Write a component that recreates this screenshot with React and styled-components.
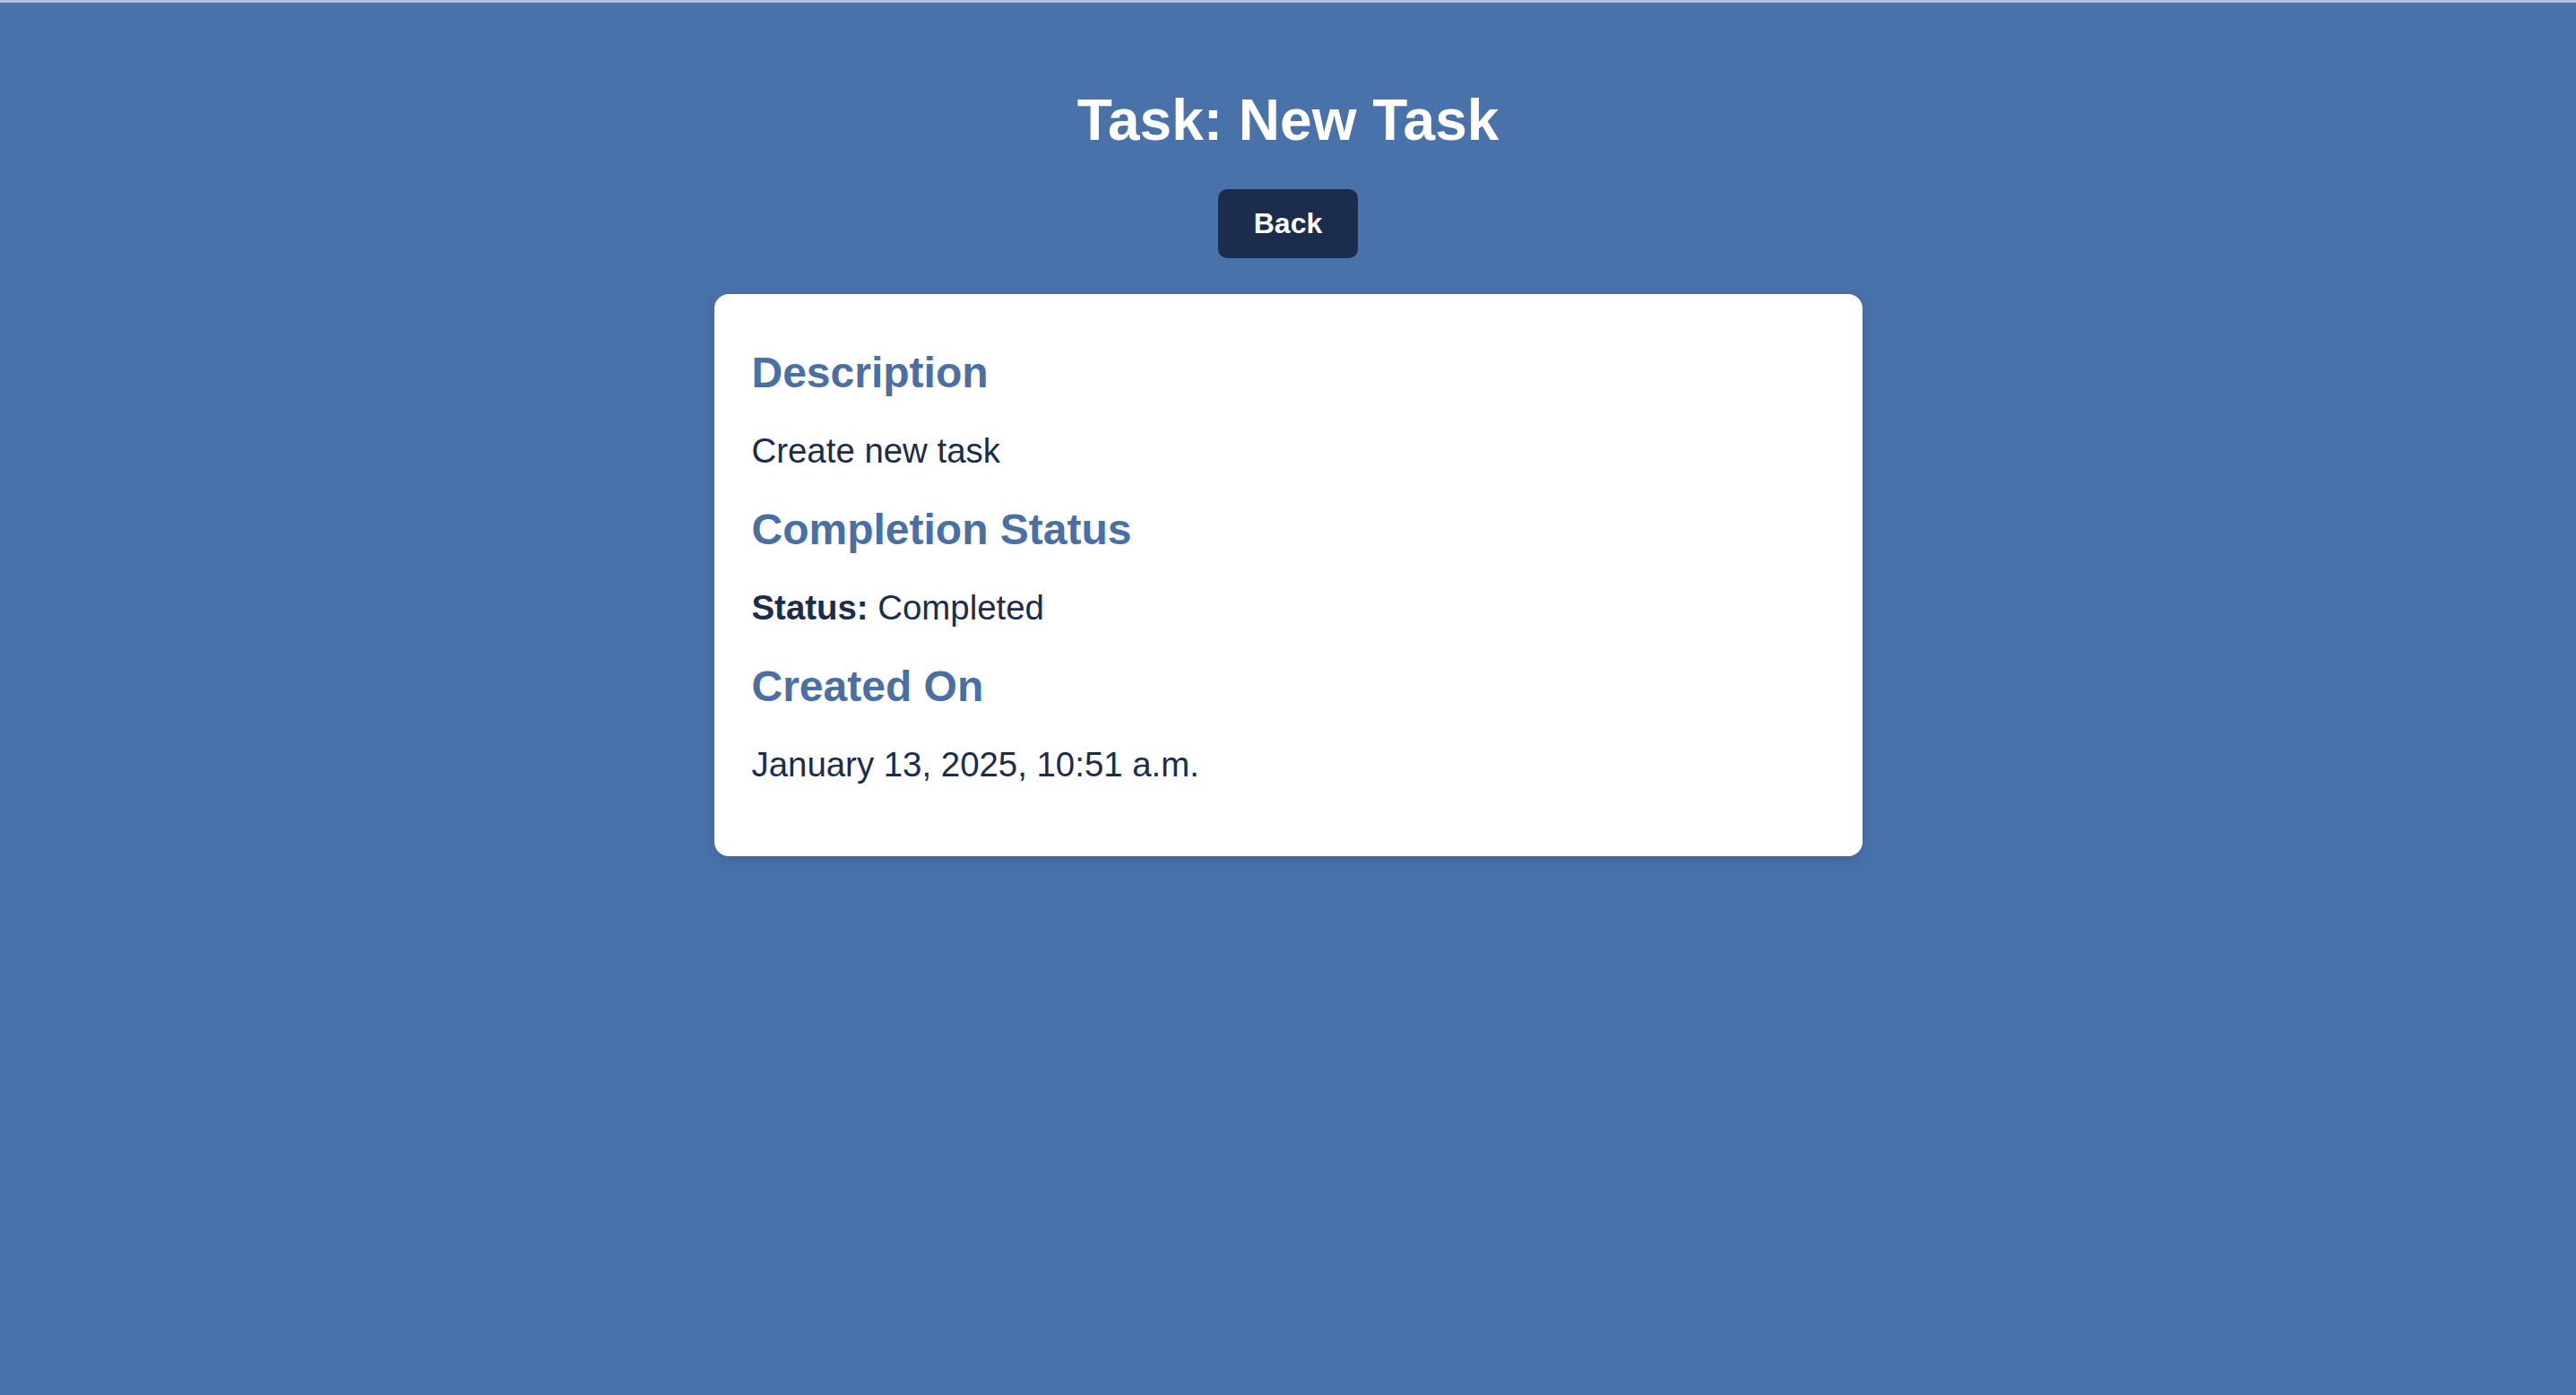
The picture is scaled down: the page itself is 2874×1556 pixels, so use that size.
import React from "react";
import styled, { createGlobalStyle } from "styled-components";

const GlobalStyle = createGlobalStyle`
  html, body {
    margin: 0;
    padding: 0;
    background-color: #4a72aa;
  }
  body {
    font-family: "Liberation Sans", Arial, Helvetica, sans-serif;
  }
`;

const TopEdge = styled.div`
  height: 3px;
  background-color: #b2bfd8;
`;

const Page = styled.div`
  min-height: 1553px;
  display: flex;
  flex-direction: column;
  align-items: center;
  padding-top: 94px;
  box-sizing: border-box;
`;

const Title = styled.h1`
  margin: 0;
  font-size: 64px;
  font-weight: 700;
  color: #ffffff;
  text-align: center;
`;

const BackButton = styled.button`
  margin-top: 40px;
  padding: 20px 40px;
  font-family: inherit;
  font-size: 32px;
  font-weight: 700;
  color: #ffffff;
  background-color: #1b2c4d;
  border: none;
  border-radius: 10px;
  cursor: pointer;
`;

const Card = styled.div`
  margin-top: 40px;
  width: 1281px;
  box-sizing: border-box;
  padding: 60px 40px 80px 42px;
  background-color: #ffffff;
  border-radius: 16px;
  box-shadow: 0 6px 16px rgba(20, 40, 80, 0.18);
  display: flex;
  flex-direction: column;
  gap: 38px;
`;

const SectionTitle = styled.h2`
  margin: 0;
  font-size: 48px;
  font-weight: 700;
  color: #4a6fa5;
`;

const Text = styled.p`
  margin: 0;
  font-size: 38.4px;
  color: #1b2c4d;
`;

const Label = styled.strong`
  font-weight: 700;
`;

const task = {
  name: "New Task",
  description: "Create new task",
  status: "Completed",
  created: "January 13, 2025, 10:51 a.m.",
};

export default function App() {
  return (
    <>
      <GlobalStyle />
      <TopEdge />
      <Page>
        <Title>Task: {task.name}</Title>
        <BackButton>Back</BackButton>
        <Card>
          <SectionTitle>Description</SectionTitle>
          <Text>{task.description}</Text>
          <SectionTitle>Completion Status</SectionTitle>
          <Text>
            <Label>Status:</Label> {task.status}
          </Text>
          <SectionTitle>Created On</SectionTitle>
          <Text>{task.created}</Text>
        </Card>
      </Page>
    </>
  );
}
